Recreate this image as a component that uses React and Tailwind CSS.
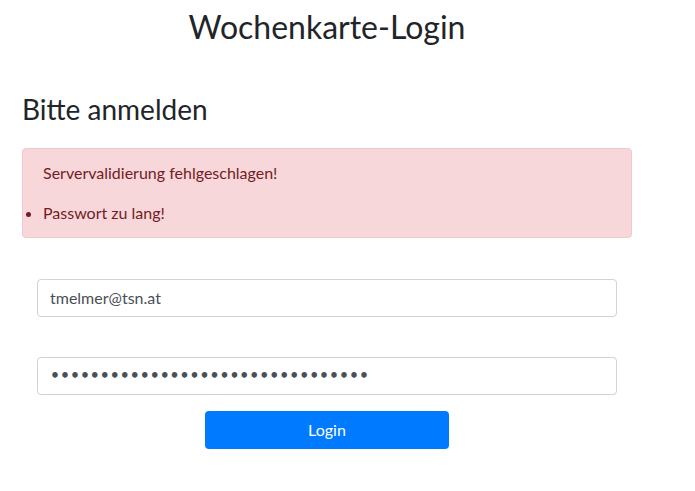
import { useState } from 'react';

export default function App() {
  const [email, setEmail] = useState('tmelmer@tsn.at');
  const [password, setPassword] = useState('12345678901234567890123456789012');

  return (
    <div className="min-h-screen bg-white text-[#212529] font-['Lato','Liberation_Sans',sans-serif]">
      <div className="w-[610px] ml-[22px]">
        <h1 className="pt-2 text-center text-[32px] leading-[1.2] font-normal">Wochenkarte-Login</h1>

        <h3 className="mt-[47px] text-[28px] leading-[1.2] font-normal">Bitte anmelden</h3>

        <div className="mt-[21px] rounded border border-[#f5c6cb] bg-[#f8d7da] px-5 py-3 text-base leading-6 text-[#721c24]">
          <p className="mb-4">Servervalidierung fehlgeschlagen!</p>
          <ul className="list-disc pl-0">
            <li>Passwort zu lang!</li>
          </ul>
        </div>

        <form className="mt-[41px] px-[15px]" onSubmit={(e) => e.preventDefault()}>
          <input
            type="email"
            value={email}
            onChange={(e) => setEmail(e.target.value)}
            className="block h-[38px] w-full rounded border border-[#ced4da] px-3 text-base text-[#495057] outline-none"
          />
          <input
            type="password"
            value={password}
            onChange={(e) => setPassword(e.target.value)}
            className="mt-[40px] block h-[38px] w-full rounded border border-[#ced4da] px-3 font-['DejaVu_Sans',sans-serif] text-[15.6px] font-bold text-[#495057] outline-none"
          />
          <div className="mt-4 flex justify-center">
            <button
              type="submit"
              className="h-[38px] w-[244px] rounded bg-[#007bff] text-base text-white"
            >
              Login
            </button>
          </div>
        </form>
      </div>
    </div>
  );
}
